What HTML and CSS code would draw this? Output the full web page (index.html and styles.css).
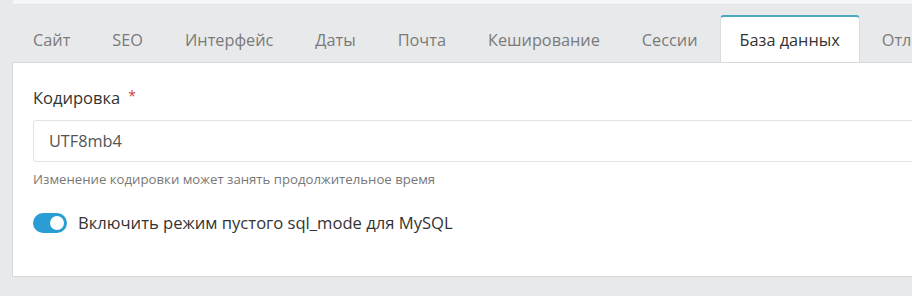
FILE: index.html
```html
<!DOCTYPE html>
<html lang="ru">
<head>
<meta charset="utf-8">
<link rel="stylesheet" href="styles.css">
</head>
<body>
<div class="page">
  <div class="prev-card"></div>
  <ul class="tabs">
    <li class="tab">Сайт</li>
    <li class="tab">SEO</li>
    <li class="tab">Интерфейс</li>
    <li class="tab">Даты</li>
    <li class="tab">Почта</li>
    <li class="tab">Кеширование</li>
    <li class="tab">Сессии</li>
    <li class="tab active">База данных</li>
    <li class="tab">Отладка</li>
  </ul>
  <div class="panel">
    <div class="field">
      <label class="label">Кодировка<span class="req">*</span></label>
      <div class="input">UTF8mb4</div>
      <div class="help">Изменение кодировки может занять продолжительное время</div>
    </div>
    <div class="switch-row">
      <span class="switch"><span class="knob"></span></span>
      <span class="switch-label">Включить режим пустого sql_mode для MySQL</span>
    </div>
  </div>
</div>
</body>
</html>
```

FILE: styles.css
```css
html, body {
  margin: 0;
  padding: 0;
  background: #e8e9ea;
  overflow: hidden;
}
body {
  font-family: "Open Sans", "Noto Sans", sans-serif;
  color: #333;
}
.page {
  padding-left: 12px;
  width: 1000px;
}
.prev-card {
  height: 4px;
  background: #f4f6f8;
  border-bottom: 1px solid #e0e2e4;
  margin-left: 1px;
}
.tabs {
  list-style: none;
  margin: 10px 0 0 0;
  padding: 0 0 0 1px;
  display: flex;
  white-space: nowrap;
}
.tab {
  padding: 0 19px;
  margin-right: 2px;
  height: 45px;
  line-height: 47px;
  font-size: 16.3px;
  color: #7a7a7a;
  border: 1px solid transparent;
  border-bottom: none;
  border-top: 2px solid transparent;
}
.tab.active {
  background: #fff;
  color: #333;
  border-color: #dcdcdc;
  border-top-color: #4da9c2;
  border-radius: 4px 4px 0 0;
  position: relative;
  z-index: 1;
  margin-bottom: -1px;
}
.panel {
  background: #fff;
  border: 1px solid #d9d9d9;
  height: 215px;
  padding: 24px 0 0 20px;
  box-sizing: border-box;
}
.label {
  display: block;
  font-size: 16.5px;
  color: #333;
  line-height: 22px;
}
.req {
  color: #c9404a;
  margin-left: 8px;
  font-size: 14px;
  vertical-align: top;
  position: relative;
  top: -2px;
}
.input {
  margin-top: 11px;
  height: 42px;
  box-sizing: border-box;
  border: 1px solid #e3e3e3;
  border-radius: 3px 0 0 3px;
  padding: 0 15px;
  line-height: 40px;
  font-size: 16.3px;
  color: #555;
}
.help {
  margin-top: 8px;
  font-size: 13.2px;
  color: #777;
  line-height: 18px;
}
.switch-row {
  margin-top: 23px;
  display: flex;
  align-items: center;
}
.switch {
  width: 34px;
  height: 20px;
  border-radius: 10px;
  background: #2a9dd4;
  position: relative;
  display: inline-block;
  flex: none;
}
.knob {
  position: absolute;
  right: 3px;
  top: 3px;
  width: 14px;
  height: 14px;
  border-radius: 50%;
  background: #fff;
}
.switch-label {
  margin-left: 11px;
  font-size: 16.6px;
  color: #333;
}
```
